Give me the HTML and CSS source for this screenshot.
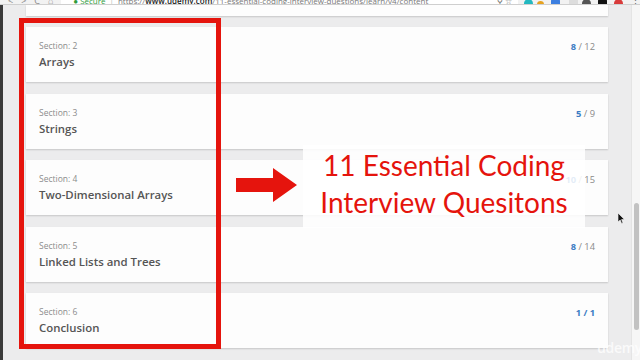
FILE: index.html
```html
<!DOCTYPE html>
<html>
<head>
<meta charset="utf-8">
<link rel="stylesheet" href="styles.css">
</head>
<body>
<div class="chrome">
  <div class="nav">
    <span class="navi">&lt;</span><span class="navi">&gt;</span><span class="navi">C</span><span class="navi">⌂</span>
  </div>
  <div class="omni">
    <span class="secure">● Secure</span><span class="sep">|</span><span class="url">https://<b>www.udemy.com</b>/11-essential-coding-interview-questions/learn/v4/content</span>
    <span class="omni-icons">⚲ ☆</span>
  </div>
  <div class="exts">
    <i class="ext e1"></i><i class="ext e2"></i><i class="ext e3"></i><i class="ext e4"></i><i class="ext e5"></i><i class="ext e6"></i><i class="ext e7"></i><span class="dots">⋮</span>
  </div>
</div>
<div class="page">
  <div class="strip"></div>
  <main class="list">
    <div class="card prev"></div>
    <div class="card">
      <div class="info"><div class="label">Section: 2</div><div class="title">Arrays</div></div>
      <div class="count"><b>8</b> / 12</div>
    </div>
    <div class="card">
      <div class="info"><div class="label">Section: 3</div><div class="title">Strings</div></div>
      <div class="count"><b>5</b> / 9</div>
    </div>
    <div class="card">
      <div class="info"><div class="label">Section: 4</div><div class="title">Two-Dimensional Arrays</div></div>
      <div class="count"><b>10</b> / 15</div>
    </div>
    <div class="card">
      <div class="info"><div class="label">Section: 5</div><div class="title">Linked Lists and Trees</div></div>
      <div class="count"><b>8</b> / 14</div>
    </div>
    <div class="card">
      <div class="info"><div class="label">Section: 6</div><div class="title">Conclusion</div></div>
      <div class="count done"><b>1 / 1</b></div>
    </div>
  </main>
  <div class="scrollbar"><div class="thumb"></div></div>
</div>

<div class="redbox"></div>
<svg class="arrow" width="61" height="34" viewBox="0 0 61 34"><polygon points="0,10 37,10 37,0 61,17 37,34 37,24 0,24" fill="#e5140d"/></svg>
<div class="callout">11 Essential Coding<br>Interview Quesitons</div>
<svg class="cursor" width="8" height="12" viewBox="0 0 8 12"><polygon points="0,0 0,9 2.2,7 3.6,10.5 5,10 3.6,6.6 6.5,6.6" fill="#111" stroke="#fff" stroke-width="0.6"/></svg>
<div class="watermark">udemy</div>
</body>
</html>
```
FILE: styles.css
```css
* { box-sizing: border-box; }
html, body { margin: 0; padding: 0; }
body {
  width: 640px;
  height: 360px;
  overflow: hidden;
  background: #ececed;
  font-family: "Open Sans", "Noto Sans", sans-serif;
  position: relative;
}
.chrome {
  height: 5px;
  background: #f2f2f2;
  border-bottom: 1px solid #cfcfcf;
  display: flex;
  align-items: flex-end;
  overflow: hidden;
  position: relative;
}
.nav {
  width: 62px;
  display: flex;
  gap: 8px;
  padding-left: 8px;
  font-size: 9px;
  line-height: 9px;
  color: #888;
  margin-bottom: -1px;
}
.omni {
  width: 463px;
  height: 4px;
  background: #fff;
  position: relative;
  display: flex;
  align-items: flex-end;
  font-size: 8px;
  line-height: 8px;
  color: #777;
  padding-left: 12px;
  white-space: nowrap;
  overflow: hidden;
}
.omni span { margin-bottom: -1px; }
.secure { color: #2e9b3a; }
.sep { color: #bbb; margin: 0 4px; }
.url b { color: #222; font-weight: 600; }
.omni-icons { position: absolute; right: 6px; bottom: 0; color: #666; }
.exts {
  display: flex;
  align-items: flex-end;
  gap: 4px;
  padding-left: 6px;
  height: 5px;
}
.ext {
  display: block;
  width: 9px;
  height: 9px;
  border-radius: 50%;
  margin-bottom: -4px;
}
.e1 { background: #23b8c0; }
.e2 { background: #e6a21f; width: 7px; height: 7px; margin-right: 3px; }
.e3 { background: #3d7fe0; border-radius: 2px; }
.e4 { background: #ddd; border-radius: 1px; margin-left: 5px; }
.e5 { background: #555; }
.e6 { background: #111; border-radius: 2px; margin-left: 3px; }
.e7 { background: #d83b3b; margin-left: 3px; }
.dots { font-size: 9px; line-height: 6px; color: #666; margin-left: 4px; }

.page {
  display: flex;
  height: 355px;
}
.strip {
  width: 3px;
  background: #3a3a3a;
}
.list {
  flex: 1;
  display: flex;
  flex-direction: column;
  gap: 11.5px;
  padding-left: 23px;
}
.card {
  width: 582px;
  height: 55px;
  flex-shrink: 0;
  background: #fdfdfd;
  box-shadow: 0 1px 1.5px rgba(0, 0, 0, 0.16);
  display: flex;
  justify-content: space-between;
  padding: 0 13px;
}
.card.prev { height: 10.5px; }
.info { padding-top: 13px; }
.label {
  font-size: 8.5px;
  line-height: 12px;
  color: #8c8c8c;
}
.title {
  margin-top: 2px;
  font-size: 11.4px;
  line-height: 16px;
  font-weight: 600;
  color: #555;
}
.count {
  padding-top: 14px;
  font-size: 9.3px;
  line-height: 12px;
  color: #8a8a8a;
}
.count b { color: #3b7cc4; font-weight: 700; }
.scrollbar {
  width: 9px;
  background: #f6f6f6;
  border-left: 1px solid #e4e4e4;
  padding-left: 2px;
}
.thumb {
  width: 5px;
  height: 127px;
  margin-top: 198px;
  border-radius: 3px;
  background: #c2c2c2;
}

.redbox {
  position: absolute;
  left: 19px;
  top: 18px;
  width: 202px;
  height: 331px;
  border: 5px solid #e5140d;
}
.arrow {
  position: absolute;
  left: 236px;
  top: 168px;
}
.callout {
  position: absolute;
  left: 303px;
  top: 145px;
  width: 282px;
  height: 83px;
  background: rgba(255, 255, 255, 0.86);
  padding-top: 2px;
  text-align: center;
  font-family: Lato, "Noto Sans", sans-serif;
  font-size: 28px;
  line-height: 37px;
  color: #e5140d;
}
.cursor {
  position: absolute;
  left: 618px;
  top: 213px;
}
.watermark {
  position: absolute;
  left: 597px;
  top: 339px;
  font-family: "Open Sans", sans-serif;
  font-size: 14px;
  line-height: 18px;
  font-weight: 600;
  color: rgba(255, 255, 255, 0.75);
  letter-spacing: -0.3px;
}
```
